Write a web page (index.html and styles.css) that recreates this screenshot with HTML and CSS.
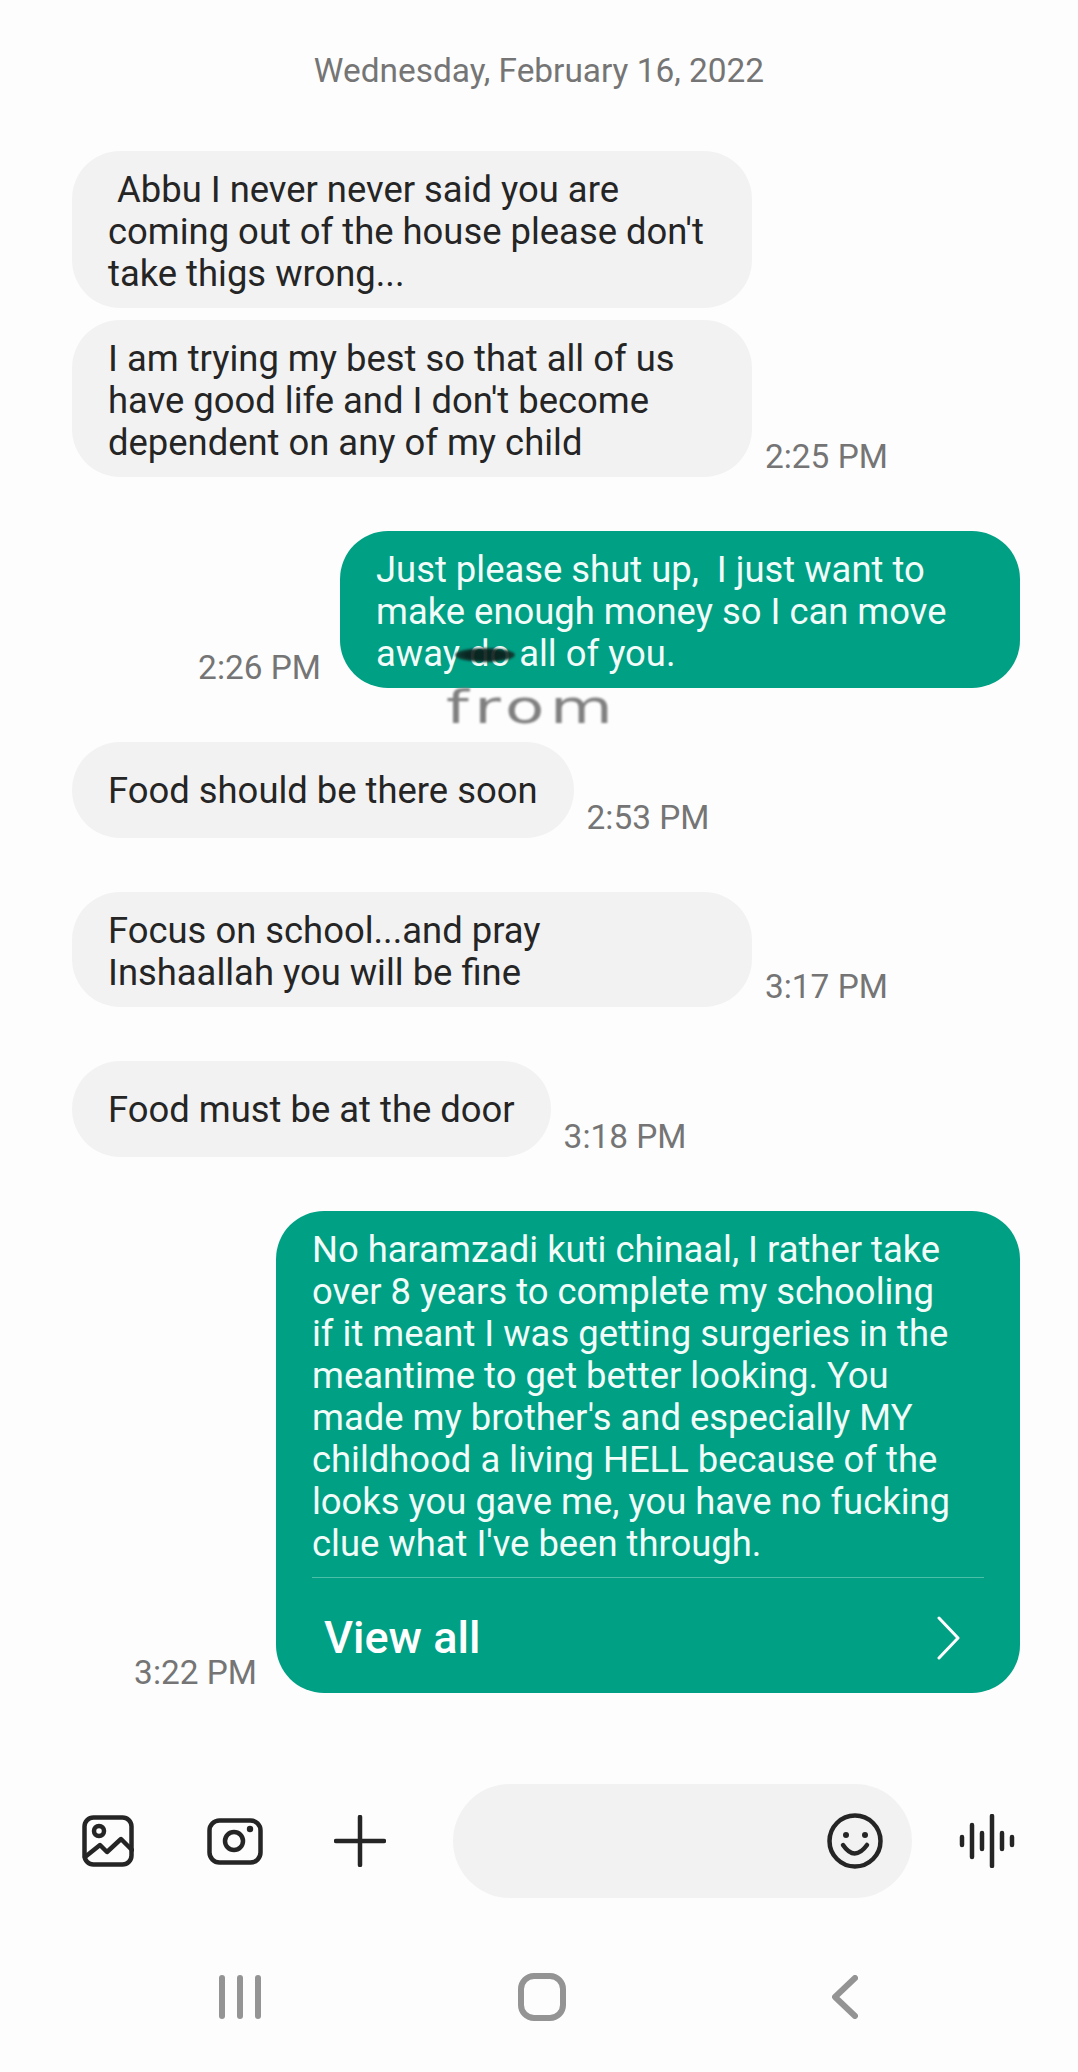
FILE: index.html
```html
<!DOCTYPE html>
<html lang="en">
<head>
  <meta charset="UTF-8">
  <meta name="viewport" content="width=device-width, initial-scale=1.0">
  <title>Messages</title>
  <link rel="stylesheet" href="styles.css">
</head>
<body>
  <main class="chat">
    <div class="date">Wednesday, February 16, 2022</div>

    <div class="row row-tight">
      <div class="bubble wide">&nbsp;Abbu I never never said you are<br>coming out of the house please don't<br>take thigs wrong...</div>
    </div>
    <div class="row">
      <div class="bubble wide">I am trying my best so that all of us<br>have good life and I don't become<br>dependent on any of my child</div>
      <span class="time">2:25 PM</span>
    </div>

    <div class="row sent">
      <span class="time">2:26 PM</span>
      <div class="bubble green wide">Just please shut up, &nbsp;I just want to<br>make enough money so I can move<br>away do all of you.
        <span class="scribble"></span>
        <span class="from">from</span>
      </div>
    </div>

    <div class="row">
      <div class="bubble">Food should be there soon</div>
      <span class="time">2:53 PM</span>
    </div>

    <div class="row">
      <div class="bubble wide">Focus on school...and pray<br>Inshaallah you will be fine</div>
      <span class="time">3:17 PM</span>
    </div>

    <div class="row">
      <div class="bubble">Food must be at the door</div>
      <span class="time">3:18 PM</span>
    </div>

    <div class="row sent">
      <span class="time">3:22 PM</span>
      <div class="bubble green long">
        <div class="long-text">No haramzadi kuti chinaal, I rather take<br>over 8 years to complete my schooling<br>if it meant I was getting surgeries in the<br>meantime to get better looking. You<br>made my brother's and especially MY<br>childhood a living HELL because of the<br>looks you gave me, you have no fucking<br>clue what I've been through.</div>
        <div class="view-all">
          <span>View all</span>
          <svg width="23" height="44" viewBox="0 0 23 44"><path d="M2 2 L21 22 L2 42" fill="none" stroke="#fff" stroke-width="3" stroke-linecap="round" stroke-linejoin="round"/></svg>
        </div>
      </div>
    </div>
  </main>

  <div class="composer">
    <svg class="ic-image" width="52" height="52" viewBox="0 0 52 52" fill="none" stroke="#252525" stroke-width="4.5" stroke-linecap="round" stroke-linejoin="round">
      <rect x="2.5" y="2.5" width="47" height="47" rx="9"/>
      <circle cx="17" cy="16" r="5"/>
      <path d="M3 42 L18 30 L25 37 L39 24 L50 35"/>
    </svg>
    <svg class="ic-camera" width="56" height="47" viewBox="0 0 56 47" fill="none" stroke="#252525" stroke-width="4.5">
      <rect x="2.5" y="2.5" width="51" height="42" rx="10"/>
      <circle cx="27" cy="23" r="9"/>
      <circle cx="43" cy="11" r="3.2" fill="#252525" stroke="none"/>
    </svg>
    <svg class="ic-plus" width="52" height="52" viewBox="0 0 52 52" fill="none" stroke="#252525" stroke-width="4.5" stroke-linecap="round">
      <path d="M26 2 V50 M2 26 H50"/>
    </svg>
    <div class="input-pill">
      <svg width="56" height="56" viewBox="0 0 56 56" fill="none" stroke="#252525" stroke-width="4.5" stroke-linecap="round">
        <circle cx="28" cy="28" r="25.5"/>
        <circle cx="19" cy="22" r="3" fill="#252525" stroke="none"/>
        <circle cx="38" cy="22" r="3" fill="#252525" stroke="none"/>
        <path d="M16 32 Q27.5 49 40 32"/>
      </svg>
    </div>
    <svg class="ic-voice" width="56" height="54" viewBox="0 0 56 54" fill="none" stroke="#252525" stroke-width="4.5" stroke-linecap="round">
      <path d="M3 23 V31 M13 11 V43 M23 19 V35 M33 2 V52 M43 19 V35 M53 23 V31"/>
    </svg>
  </div>

  <nav class="navbar">
    <svg class="nav-recent" width="42" height="44" viewBox="0 0 42 44" fill="#949494">
      <rect x="0" y="0" width="6" height="44" rx="3"/>
      <rect x="18" y="0" width="6" height="44" rx="3"/>
      <rect x="36" y="0" width="6" height="44" rx="3"/>
    </svg>
    <svg class="nav-home" width="48" height="48" viewBox="0 0 48 48" fill="none" stroke="#949494" stroke-width="6">
      <rect x="3" y="3" width="42" height="42" rx="13"/>
    </svg>
    <svg class="nav-back" width="26" height="44" viewBox="0 0 26 44" fill="none" stroke="#949494" stroke-width="6" stroke-linecap="round" stroke-linejoin="round">
      <path d="M23 3 L3 22 L23 41"/>
    </svg>
  </nav>
</body>
</html>
```

FILE: styles.css
```css
* {
  box-sizing: border-box;
}

body {
  margin: 0;
  width: 1078px;
  height: 2072px;
  overflow: hidden;
  background-color: #fdfdfd;
  font-family: Roboto, "Liberation Sans", sans-serif;
  color: #252525;
}

.chat {
  padding: 51px 58px 0 72px;
}

.date {
  height: 38px;
  margin: 0 14px 62px 0;
  padding-top: 1px;
  font-size: 33.4px;
  line-height: 38px;
  text-align: center;
  color: #757575;
}

.row {
  display: flex;
  align-items: flex-end;
  gap: 13px;
  margin-bottom: 54px;
}

.row-tight {
  margin-bottom: 12px;
}

.row.sent {
  justify-content: flex-end;
  gap: 19px;
}

.time {
  font-size: 33.4px;
  line-height: 38px;
  color: #757575;
  white-space: nowrap;
  padding-bottom: 1px;
}

.bubble {
  position: relative;
  min-height: 96px;
  padding: 28px 36px 26px;
  border-radius: 48px;
  background-color: #f2f2f2;
  font-size: 36.4px;
  line-height: 42px;
  white-space: nowrap;
}

.bubble.wide {
  width: 680px;
  padding-top: 18px;
  padding-bottom: 13px;
}

.green {
  background-color: #00a085;
  color: #f2fdfa;
}

.long {
  width: 744px;
  height: 482px;
  padding: 18px 36px 0;
}

.long-text {
  height: 349px;
  border-bottom: 1px solid #4cbfa8;
}

.view-all {
  display: flex;
  align-items: center;
  justify-content: space-between;
  padding: 34px 24px 0 12px;
  font-size: 45px;
  font-weight: 500;
  line-height: 52px;
  color: #fff;
}

/* pen marks drawn on the screenshot */
.scribble {
  position: absolute;
  left: 115px;
  top: 117px;
  width: 60px;
  height: 14px;
  border-radius: 50%;
  background: radial-gradient(ellipse, #0b1a17 45%, #1b5a4d 100%);
  opacity: 0.9;
  filter: blur(1.2px);
}

.from {
  position: absolute;
  left: 106px;
  top: 151px;
  font-family: "DejaVu Sans", sans-serif;
  font-size: 46px;
  line-height: 50px;
  letter-spacing: 4px;
  color: #808080;
  transform: scaleX(1.4);
  transform-origin: left center;
  filter: blur(0.8px);
}

.composer {
  display: flex;
  align-items: center;
  height: 114px;
  margin-top: 91px;
  padding-left: 82px;
}

.ic-camera {
  margin-left: 73px;
}

.ic-plus {
  margin-left: 71px;
}

.input-pill {
  display: flex;
  align-items: center;
  justify-content: flex-end;
  width: 459px;
  height: 114px;
  margin-left: 67px;
  padding-right: 29px;
  border-radius: 57px;
  background-color: #f2f2f2;
}

.ic-voice {
  margin-left: 47px;
}

.navbar {
  display: flex;
  align-items: center;
  height: 48px;
  margin-top: 75px;
  padding-left: 219px;
}

.nav-home {
  margin-left: 257px;
}

.nav-back {
  margin-left: 266px;
}
```
